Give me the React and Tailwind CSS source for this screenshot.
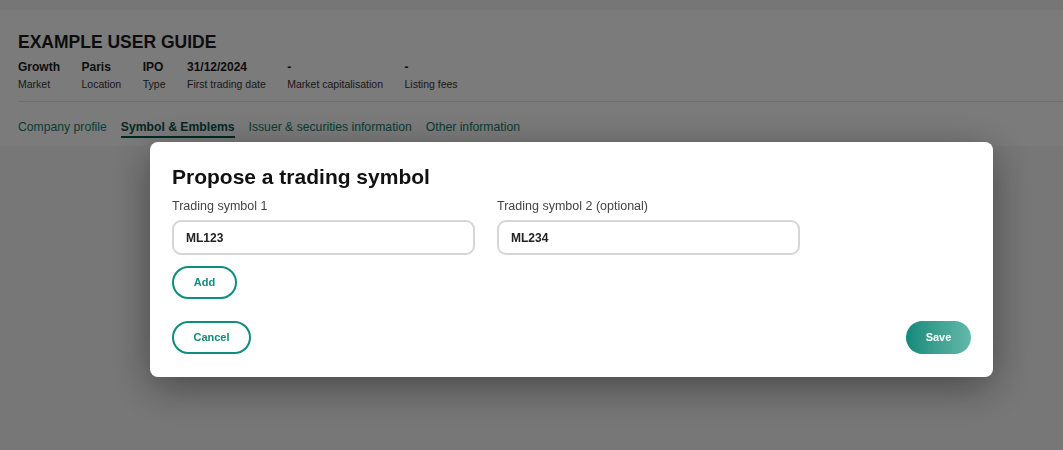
const meta = [
  { value: 'Growth', label: 'Market' },
  { value: 'Paris', label: 'Location' },
  { value: 'IPO', label: 'Type' },
  { value: '31/12/2024', label: 'First trading date' },
  { value: '-', label: 'Market capitalisation' },
  { value: '-', label: 'Listing fees' },
];

const tabs = ['Company profile', 'Symbol & Emblems', 'Issuer & securities information', 'Other information'];

const Field = ({ label, value }) => (
  <div className="flex flex-col w-[303px]">
    <label className="text-[12.5px] leading-[16px] text-[#444]">{label}</label>
    <div className="mt-[6px] h-[35px] rounded-[9px] border-2 border-[#d6d6d6] flex items-center pl-[12px] text-[12px] font-bold text-[#222]">
      {value}
    </div>
  </div>
);

export default function App() {
  return (
    <div className="relative min-h-screen bg-[#efefef] font-['Liberation_Sans',Arial,sans-serif]">
      <div className="h-[10px] bg-[#ececec]" />
      <div className="bg-[#f6f6f6] pl-[18px] pt-[21px] h-[136px]">
        <h1 className="text-[17.5px] leading-[22px] font-bold text-[#1a1a1a]">EXAMPLE USER GUIDE</h1>
        <div className="flex gap-[21.5px] mt-[6px]">
          {meta.map((m, i) => (
            <div key={i} className="flex flex-col">
              <span className="text-[12px] leading-[16px] font-bold text-[#1a1a1a]">{m.value}</span>
              <span className="text-[10.5px] leading-[14px] text-[#333] mt-[2px]">{m.label}</span>
            </div>
          ))}
        </div>
        <div className="mt-[10px] border-t border-[#dcdcdc]" />
        <div className="flex gap-[14px] mt-[17px]">
          {tabs.map((t, i) => (
            <span
              key={t}
              className={
                i === 1
                  ? 'text-[12.2px] leading-[16px] font-bold text-[#0a4f46] pb-[1px] border-b-2 border-[#0a4f46]'
                  : 'text-[12.2px] leading-[16px] text-[#0f7a6c] pb-[1px]'
              }
            >
              {t}
            </span>
          ))}
        </div>
      </div>

      <div className="fixed inset-0 bg-black/[0.5] pl-[150px] pt-[142px]">
        <div className="w-[843px] bg-white rounded-[8px] shadow-[0_10px_40px_rgba(0,0,0,0.4)] px-[22px] pt-[21px] pb-[23px]">
          <h2 className="text-[21px] leading-[27px] font-bold text-[#111]">Propose a trading symbol</h2>
          <div className="flex gap-[22px] mt-[8px]">
            <Field label="Trading symbol 1" value="ML123" />
            <Field label="Trading symbol 2 (optional)" value="ML234" />
          </div>
          <button className="mt-[11px] w-[65px] h-[33px] rounded-full border-2 border-[#0e8c7c] text-[11px] font-bold text-[#0e8c7c]">
            Add
          </button>
          <div className="flex justify-between items-center mt-[22px]">
            <button className="w-[79px] h-[33px] rounded-full border-2 border-[#0e8c7c] text-[11px] font-bold text-[#0e8c7c]">
              Cancel
            </button>
            <button className="w-[65px] h-[33px] rounded-full bg-gradient-to-r from-[#0e8a7a] to-[#62b9ab] text-[11px] font-bold text-white">
              Save
            </button>
          </div>
        </div>
      </div>
    </div>
  );
}
